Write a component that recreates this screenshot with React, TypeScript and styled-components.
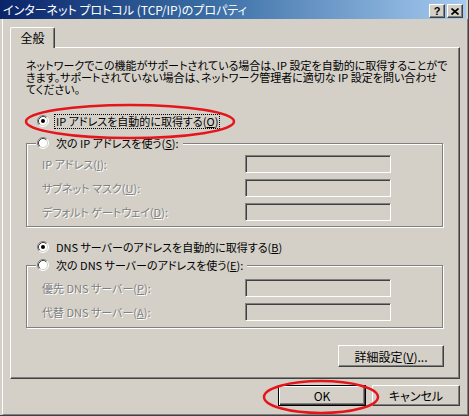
import React from "react";
import styled, { createGlobalStyle } from "styled-components";

const FONT = `"Noto Sans CJK JP", "Noto Sans", sans-serif`;

const GlobalStyle = createGlobalStyle`
  html, body { margin: 0; padding: 0; background: #D4D0C8; }
  body { font-family: ${FONT}; font-size: 12px; }
`;

const Window = styled.div`
  position: relative;
  width: 469px;
  height: 416px;
  box-sizing: border-box;
  display: flex;
  flex-direction: column;
  background: #d4d0c8;
  border-right: 1px solid #404040;
  border-bottom: 1px solid #404040;
  font-family: ${FONT};
  font-size: 11px;
  color: #000;
  font-feature-settings: "palt";
  overflow: hidden;
`;

const TitleBar = styled.div`
  height: 19px;
  margin-right: 2px;
  display: flex;
  align-items: flex-start;
  background: linear-gradient(to right, #0a246a 0%, #3a6ea5 45%, #a6caf0 100%);
  padding-left: 3px;
`;

const TitleText = styled.div`
  flex: 1;
  color: #fff;
  font-size: 12px;
  line-height: 19px;
  white-space: nowrap;
`;

const TitleButtons = styled.div`
  display: flex;
  gap: 2px;
  margin-top: 4px;
  margin-right: 3px;
`;

const CaptionButton = styled.div`
  width: 16px;
  height: 14px;
  box-sizing: border-box;
  background: #d4d0c8;
  border-left: 1px solid #fff;
  border-top: 1px solid #fff;
  border-right: 1px solid #404040;
  border-bottom: 1px solid #404040;
  box-shadow: inset -1px -1px 0 #808080;
  display: flex;
  align-items: center;
  justify-content: center;
  font-family: "Liberation Sans", sans-serif;
  font-weight: bold;
  font-size: 11px;
  line-height: 12px;
  color: #000;
`;

const Body = styled.div`
  flex: 1;
  margin-left: 2px;
  border-left: 1px solid #fff;
  border-right: 1px solid #808080;
  border-bottom: 1px solid #808080;
  padding: 8px 7px 0 7px;
  display: flex;
  flex-direction: column;
`;

const TabStrip = styled.div`
  display: flex;
  height: 20px;
`;

const Tab = styled.div`
  position: relative;
  z-index: 1;
  width: 45px;
  height: 21px;
  box-sizing: border-box;
  background: #d4d0c8;
  border-left: 1px solid #fff;
  border-top: 1px solid #fff;
  border-right: 1px solid #404040;
  border-top-left-radius: 2px;
  border-top-right-radius: 2px;
  box-shadow: inset -1px 0 0 #808080;
  text-align: center;
  font-size: 12px;
  line-height: 19px;
  margin-bottom: -1px;
`;

const Panel = styled.div`
  height: 332px;
  box-sizing: border-box;
  border-left: 1px solid #fff;
  border-top: 1px solid #fff;
  border-right: 1px solid #404040;
  border-bottom: 1px solid #404040;
  box-shadow: inset -1px -1px 0 #808080;
  padding: 11px 15px 0 15px;
  display: flex;
  flex-direction: column;
`;

const Description = styled.div`
  line-height: 12px;
  white-space: nowrap;
`;

const RadioRow = styled.div<{ $mt?: number }>`
  display: flex;
  align-items: center;
  height: 16px;
  margin-top: ${(p) => p.$mt ?? 0}px;
  padding-left: 11px;
  white-space: nowrap;
`;

const RadioLabel = styled.span<{ $focus?: boolean }>`
  margin-left: 5px;
  line-height: 13px;
  padding: 0 1px;
  border: 1px dotted ${(p) => (p.$focus ? "#000" : "transparent")};
`;

const GroupBox = styled.div<{ $mt: number; $pt: number; $pb: number }>`
  position: relative;
  margin-top: ${(p) => p.$mt}px;
  margin-right: 1px;
  border: 1px solid #808080;
  box-shadow: 1px 1px 0 #fff, inset 1px 1px 0 #fff;
  padding: ${(p) => p.$pt}px 0 ${(p) => p.$pb}px 15px;
  display: flex;
  flex-direction: column;
  gap: 6px;
`;

const Legend = styled.div`
  position: absolute;
  top: -9px;
  left: 9px;
  display: flex;
  align-items: center;
  height: 16px;
  padding: 0 2px 0 1px;
  background: #d4d0c8;
  white-space: nowrap;
`;

const FieldRow = styled.div`
  display: grid;
  grid-template-columns: 203px 146px;
  align-items: center;
  height: 18px;
`;

const DisabledLabel = styled.span`
  color: #808080;
  text-shadow: 1px 1px 0 #fff;
  white-space: nowrap;
`;

const Field = styled.div`
  height: 18px;
  box-sizing: border-box;
  background: #d4d0c8;
  border-left: 1px solid #808080;
  border-top: 1px solid #808080;
  border-right: 1px solid #fff;
  border-bottom: 1px solid #fff;
  box-shadow: inset 1px 1px 0 #404040, inset -1px -1px 0 #d4d0c8;
`;

const ButtonRow = styled.div<{ $mt: number; $gap?: number }>`
  display: flex;
  justify-content: flex-end;
  gap: ${(p) => p.$gap ?? 0}px;
  margin-top: ${(p) => p.$mt}px;
`;

const Button = styled.div<{ $w: number; $h: number; $default?: boolean }>`
  width: ${(p) => p.$w}px;
  height: ${(p) => p.$h}px;
  box-sizing: border-box;
  background: #d4d0c8;
  display: flex;
  align-items: center;
  justify-content: center;
  white-space: nowrap;
  font-size: 12px;
  border: 1px solid;
  border-color: ${(p) =>
    p.$default ? "#000" : "#fff #404040 #404040 #fff"};
  box-shadow: ${(p) =>
    p.$default
      ? "inset 1px 1px 0 #fff, inset -1px -1px 0 #404040, inset -2px -2px 0 #808080"
      : "inset -1px -1px 0 #808080"};
`;

const Overlay = styled.svg`
  position: absolute;
  left: 0;
  top: 0;
  pointer-events: none;
`;

const Radio: React.FC<{ checked?: boolean }> = ({ checked }) => (
  <svg width="12" height="12" viewBox="0 0 12 12" style={{ flex: "none" }}>
    <circle cx="6" cy="6" r="5" fill="#fff" />
    <path d="M2.11 9.89 A5.5 5.5 0 0 1 9.89 2.11" stroke="#808080" strokeWidth="1" fill="none" />
    <path d="M9.89 2.11 A5.5 5.5 0 0 1 2.11 9.89" stroke="#fff" strokeWidth="1" fill="none" />
    <path d="M2.82 9.18 A4.5 4.5 0 0 1 9.18 2.82" stroke="#404040" strokeWidth="1" fill="none" />
    <path d="M9.18 2.82 A4.5 4.5 0 0 1 2.82 9.18" stroke="#d4d0c8" strokeWidth="1" fill="none" />
    {checked && <circle cx="6" cy="6" r="2" fill="#000" />}
  </svg>
);

const fields1 = [
  ["IP アドレス(", "I", "):"],
  ["サブネット マスク(", "U", "):"],
  ["デフォルト ゲートウェイ(", "D", "):"],
];
const fields2 = [
  ["優先 DNS サーバー(", "P", "):"],
  ["代替 DNS サーバー(", "A", "):"],
];

export default function App() {
  return (
    <>
      <GlobalStyle />
      <Window>
        <TitleBar>
          <TitleText>インターネット プロトコル (TCP/IP)のプロパティ</TitleText>
          <TitleButtons>
            <CaptionButton>?</CaptionButton>
            <CaptionButton>
              <svg width="8" height="7" viewBox="0 0 8 7">
                <path d="M0.5 0.5 L7.5 6.5 M7.5 0.5 L0.5 6.5" stroke="#000" strokeWidth="1.7" />
              </svg>
            </CaptionButton>
          </TitleButtons>
        </TitleBar>
        <Body>
          <TabStrip>
            <Tab>全般</Tab>
          </TabStrip>
          <Panel>
            <Description>
              ネットワークでこの機能がサポートされている場合は、IP 設定を自動的に取得することがで
              <br />
              きます。サポートされていない場合は、ネットワーク管理者に適切な IP 設定を問い合わせ
              <br />
              てください。
            </Description>
            <RadioRow $mt={18}>
              <Radio checked />
              <RadioLabel $focus>
                IP アドレスを自動的に取得する(<u>O</u>)
              </RadioLabel>
            </RadioRow>
            <GroupBox $mt={14} $pt={11} $pb={5}>
              <Legend>
                <Radio />
                <RadioLabel>
                  次の IP アドレスを使う(<u>S</u>):
                </RadioLabel>
              </Legend>
              {fields1.map(([a, k, b]) => (
                <FieldRow key={k}>
                  <DisabledLabel>
                    {a}
                    <u>{k}</u>
                    {b}
                  </DisabledLabel>
                  <Field />
                </FieldRow>
              ))}
            </GroupBox>
            <RadioRow $mt={12}>
              <Radio checked />
              <RadioLabel>
                DNS サーバーのアドレスを自動的に取得する(<u>B</u>)
              </RadioLabel>
            </RadioRow>
            <GroupBox $mt={10} $pt={13} $pb={6}>
              <Legend>
                <Radio />
                <RadioLabel>
                  次の DNS サーバーのアドレスを使う(<u>E</u>):
                </RadioLabel>
              </Legend>
              {fields2.map(([a, k, b]) => (
                <FieldRow key={k}>
                  <DisabledLabel>
                    {a}
                    <u>{k}</u>
                    {b}
                  </DisabledLabel>
                  <Field />
                </FieldRow>
              ))}
            </GroupBox>
            <ButtonRow $mt={17}>
              <Button $w={106} $h={22}>
                詳細設定(<u>V</u>)...
              </Button>
            </ButtonRow>
          </Panel>
          <ButtonRow $mt={6} $gap={6}>
            <Button $w={88} $h={21} $default>
              OK
            </Button>
            <Button $w={88} $h={21}>
              キャンセル
            </Button>
          </ButtonRow>
        </Body>
        <Overlay width="469" height="416" viewBox="0 0 469 416">
          <ellipse cx="130" cy="121.5" rx="104" ry="16.5" fill="none" stroke="#e5161b" strokeWidth="2.5" />
          <ellipse cx="321" cy="397" rx="57" ry="16" fill="none" stroke="#e5161b" strokeWidth="2.5" />
        </Overlay>
      </Window>
    </>
  );
}
